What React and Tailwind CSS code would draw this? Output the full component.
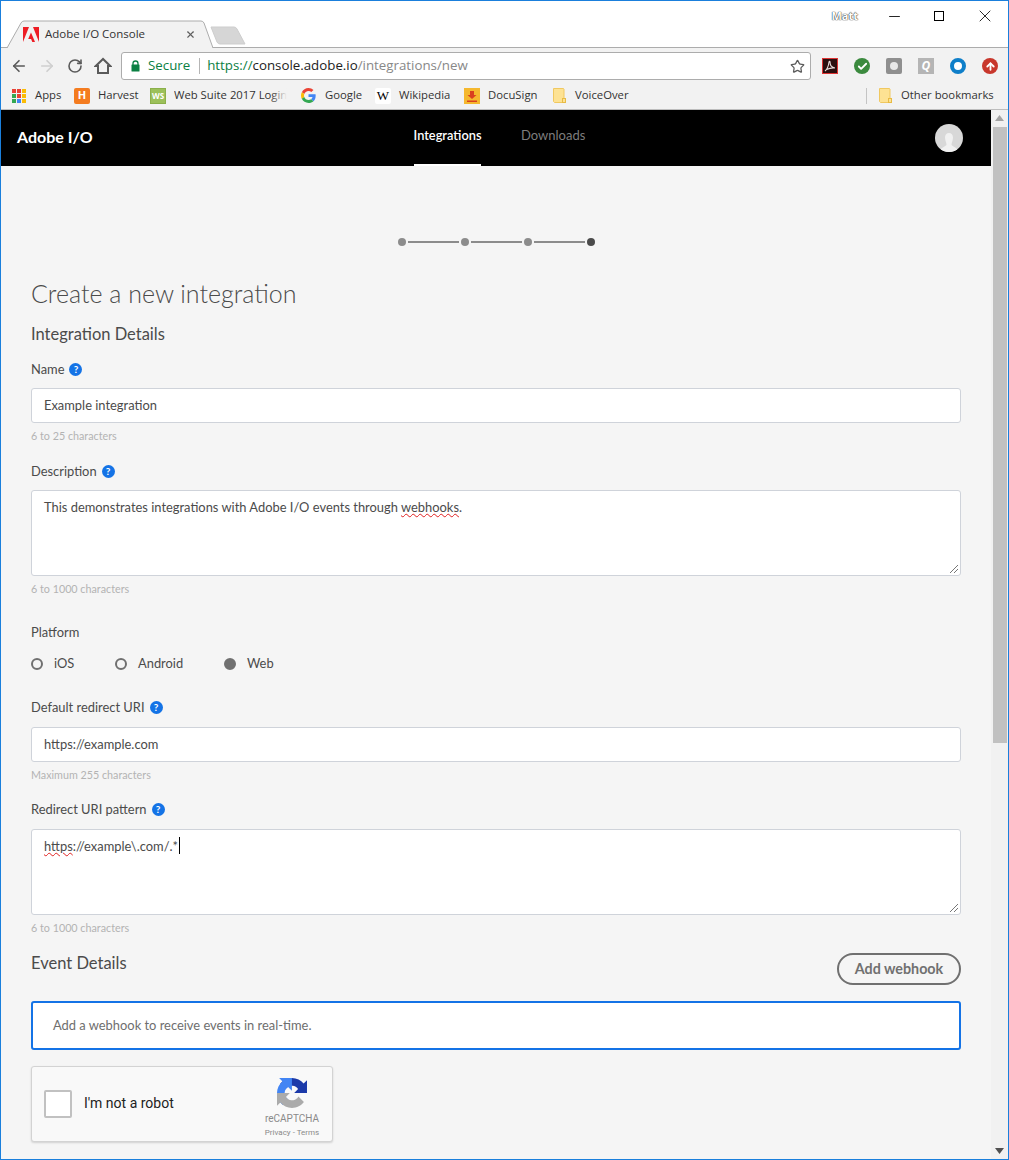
import { ArrowLeft, ArrowRight, RotateCw, Star, X, Minus, Check, ArrowUp } from 'lucide-react'

const UI_FONT = { fontFamily: '"Open Sans", sans-serif' }

function Help() {
  return (
    <span className="mb-[2px] ml-[5px] inline-flex h-[13px] w-[13px] items-center justify-center rounded-full bg-[#1473e6] text-[10px] font-bold leading-none text-white">?</span>
  )
}

function Label({ children, help, className = '' }) {
  return (
    <div className={`flex h-5 items-center text-[12.9px] text-[#4b4b4b] ${className}`}>
      {children}
      {help && <Help />}
    </div>
  )
}

function Hint({ children, className = '' }) {
  return <div className={`h-4 text-[10.75px] leading-4 text-[#b3b3b3] ${className}`}>{children}</div>
}

function TextInput({ children, className = '' }) {
  return (
    <div className={`flex h-[35px] items-center rounded-[3px] border border-[#cfd3da] bg-white px-3 text-[12.9px] text-[#4b4b4b] ${className}`}>
      {children}
    </div>
  )
}

function TextArea({ children, className = '' }) {
  return (
    <div className={`relative h-[86px] rounded-[3px] border border-[#cfd3da] bg-white px-3 pt-[6px] text-[12.9px] leading-5 text-[#4b4b4b] ${className}`}>
      {children}
      <svg className="absolute bottom-[1px] right-[1px]" width="10" height="10" viewBox="0 0 10 10">
        <path d="M1 9 9 1M5 9l4-4" stroke="#777" strokeWidth="1" fill="none" />
      </svg>
    </div>
  )
}

function Radio({ label, checked, className = '' }) {
  return (
    <div className={`flex items-center ${className}`}>
      <span className={`h-3 w-3 rounded-full border-2 border-[#707070] ${checked ? 'bg-[#707070]' : 'bg-transparent'}`} />
      <span className="ml-[11px] text-[12.9px] text-[#4b4b4b]">{label}</span>
    </div>
  )
}

function Folder() {
  return (
    <svg width="13" height="15" viewBox="0 0 13 15">
      <path d="M.5.5h10l.5.5v13.500H1.500l-1-1z" fill="#fde293" stroke="#f0c860" />
      <rect x="9.500" y="10.500" width="3" height="4" fill="#fde293" stroke="#e8bb45" />
    </svg>
  )
}

function Bookmark({ icon, children, className = '' }) {
  return (
    <div className={`flex items-center text-[11.3px] text-[#333] ${className}`}>
      {icon}
      {children}
    </div>
  )
}

function AppsGrid() {
  const colors = ['#e94235', '#e94235', '#fbbc04', '#34a853', '#e94235', '#fbbc04', '#34a853', '#4285f4', '#fbbc04']
  return (
    <div className="grid w-[14px] grid-cols-3 gap-[1px]">
      {colors.map((c, i) => (
        <span key={i} className="h-[4px] w-[4px]" style={{ background: c }} />
      ))}
    </div>
  )
}

function GoogleG() {
  return (
    <svg width="15" height="15" viewBox="0 0 48 48">
      <path fill="#EA4335" d="M24 9.500c3.500 0 6.700 1.300 9.100 3.500l6.800-6.800C35.800 2.400 30.200 0 24 0 14.600 0 6.500 5.400 2.600 13.200l7.900 6.100C12.400 13.700 17.700 9.500 24 9.500z" />
      <path fill="#4285F4" d="M46.900 24.500c0-1.600-.1-3.100-.4-4.500H24v9h12.900c-.6 3-2.200 5.500-4.700 7.200l7.700 6c4.500-4.200 7-10.300 7-17.700z" />
      <path fill="#FBBC05" d="M10.500 28.700c-.5-1.400-.8-3-.8-4.700s.3-3.200.8-4.700l-7.900-6.100C.9 16.500 0 20.100 0 24s.9 7.500 2.600 10.800l7.900-6.100z" />
      <path fill="#34A853" d="M24 48c6.500 0 11.900-2.100 15.900-5.800l-7.700-6c-2.100 1.400-4.900 2.300-8.200 2.300-6.300 0-11.600-4.200-13.500-9.900l-7.900 6.100C6.500 42.600 14.600 48 24 48z" />
    </svg>
  )
}

function AdobeLogo() {
  return (
    <svg width="16" height="15" viewBox="0 0 16 15">
      <path fill="#ed1c24" d="M10 0h6v15zM6 0H0v15zM8 5.500 12 15H9.300l-1.200-3H5.200z" />
    </svg>
  )
}

function HomeIcon() {
  return (
    <svg className="ml-[11px]" width="18" height="18" viewBox="0 0 18 18">
      <path d="M9 2 1.800 9H4v7h10V9h2.200z" fill="none" stroke="#5a5a5a" strokeWidth="2" strokeLinejoin="miter" />
    </svg>
  )
}

function LockIcon() {
  return (
    <svg width="9" height="12" viewBox="0 0 9 12">
      <path d="M2 5V3.500a2.500 2.500 0 0 1 5 0V5" fill="none" stroke="#0b8043" strokeWidth="1.300" />
      <rect x="0.500" y="4.500" width="8" height="7" rx="0.500" fill="#0b8043" />
    </svg>
  )
}

function ReaderIcon() {
  return (
    <div className="flex h-4 w-4 items-center justify-center border border-[#d33] bg-[#2b0f0f]">
      <svg width="12" height="12" viewBox="0 0 12 12">
        <path d="M1 11c2-1.500 3.500-5 4-9 .2-1 1-1 1 0 0 3 2 5.500 5 6-3-.5-6 .3-8.500 1.500" fill="none" stroke="#e8dcdc" strokeWidth="1.100" />
      </svg>
    </div>
  )
}

function DocuSignIcon() {
  return (
    <svg width="16" height="16" viewBox="0 0 16 16">
      <rect width="16" height="16" fill="#f5b82e" />
      <path d="M6 3h4v4h2.500L8 11 3.500 7H6zM3 12.500h10V14H3z" fill="#d9401f" />
    </svg>
  )
}

function RecaptchaLogo() {
  return (
    <svg width="30" height="30" viewBox="0 0 64 64">
      <path fill="#1c3aa9" d="M64 31.955l-.033-1.37V4.687l-7.160 7.160C50.948 4.674 42.033.093 32.050.093c-10.400 0-19.622 4.960-25.458 12.640l11.736 11.860a15.550 15.550 0 0 1 4.754-5.334c2.050-1.600 4.952-2.906 8.968-2.906.485 0 .860.057 1.135.163 4.976.393 9.288 3.140 11.828 7.124l-8.307 8.307 32.294.010" />
      <path fill="#4285f4" d="M31.862.094l-1.370.033H4.594l7.160 7.160C4.580 13.147 0 22.060 0 32.045c0 10.400 4.960 19.622 12.640 25.458L24.500 45.768a15.550 15.550 0 0 1-5.334-4.754c-1.600-2.050-2.906-4.952-2.906-8.968 0-.485.057-.860.163-1.135.393-4.976 3.140-9.288 7.124-11.828l8.307 8.307.010-32.294" />
      <path fill="#ababab" d="M.001 32.045l.033 1.370v25.898l7.160-7.160c5.860 7.173 14.774 11.754 24.760 11.754 10.400 0 19.622-4.960 25.458-12.640L45.677 39.407a15.550 15.550 0 0 1-4.754 5.334c-2.050 1.600-4.952 2.906-8.968 2.906-.485 0-.860-.057-1.135-.163-4.976-.393-9.288-3.140-11.828-7.124l8.307-8.307-32.294-.010" />
    </svg>
  )
}

function BrowserChrome() {
  return (
    <div style={UI_FONT}>
      {/* tab strip */}
      <div className="relative flex h-[47px] items-start border-b border-[#acacac] bg-white">
        <div className="relative ml-[6px] mt-[19px] flex h-[28px] w-[206px] items-center pl-[16px] pr-[17px]">
          <svg className="absolute left-0 top-0" width="206" height="28" viewBox="0 0 206 28">
            <path d="M0 28 14 3q1-2 3-2h177q2 0 3 2l9 25" fill="#f2f2f2" stroke="#acacac" />
          </svg>
          <span className="relative"><AdobeLogo /></span>
          <span className="relative ml-[6px] flex-1 text-[11.5px] text-[#333]">Adobe I/O Console</span>
          <X size={11} strokeWidth={2.5} className="relative text-[#5f5f5f]" />
        </div>
        <svg className="ml-[-3px] mt-[25px]" width="36" height="19" viewBox="0 0 36 19">
          <path d="M1 1h23q2 0 3 2l8 15H10q-2 0-3-2z" fill="#d6d6d6" stroke="#cdcdcd" />
        </svg>
        <div className="ml-auto mr-[13px] mt-[5px] flex items-center">
          <span className="mr-[28px] text-[11px] font-bold text-white [text-shadow:0_0_1px_#222,0_0_1px_#222]">Matt</span>
          <Minus size={17} strokeWidth={1.2} className="mr-[31px] text-black" />
          <span className="mr-[31px] h-[10px] w-[10px] border border-black" />
          <X size={20} strokeWidth={1} className="text-black" />
        </div>
      </div>

      {/* toolbar */}
      <div className="flex h-[37px] items-center bg-[#f2f2f2] pb-[1px] pl-[9px] pr-[10px]">
        <ArrowLeft size={18} strokeWidth={2.2} className="text-[#5a5a5a]" />
        <ArrowRight size={18} strokeWidth={2.2} className="ml-[10px] text-[#cfcfcf]" />
        <RotateCw size={16} strokeWidth={2.4} className="ml-[11px] text-[#5a5a5a]" />
        <HomeIcon />
        <div className="ml-[9px] flex h-[28px] w-[690px] items-center rounded-[3px] border border-[#acacac] bg-white pl-[9px] pr-[5px] text-[13.3px]">
          <LockIcon />
          <span className="ml-[8px] text-[#0b8043]">Secure</span>
          <span className="ml-[9px] mr-[7px] h-[16px] w-px bg-[#b5b5b5]" />
          <span className="text-[#0b8043]">https://</span>
          <span className="text-[#222]">console.adobe.io</span>
          <span className="text-[#888]">/integrations/new</span>
          <Star size={15} strokeWidth={2} className="ml-auto text-[#5a5a5a]" />
        </div>
        <div className="ml-[11px]"><ReaderIcon /></div>
        <div className="ml-[16px] flex h-4 w-4 items-center justify-center rounded-full bg-[#3b8a3e]"><Check size={11} strokeWidth={4} className="text-white" /></div>
        <div className="ml-[16px] flex h-4 w-4 items-center justify-center rounded-[2px] bg-[#8f8f8f]"><span className="h-[8px] w-[8px] rounded-full bg-[#e8e8e8]" /></div>
        <div className="ml-[16px] flex h-4 w-4 items-center justify-center bg-[#b5b5b5] text-[12px] font-bold italic leading-none text-white">Q</div>
        <div className="ml-[16px] h-4 w-4 rounded-full border-[4px] border-[#0f7fc9] bg-white" />
        <div className="ml-[16px] flex h-4 w-4 items-center justify-center rounded-full bg-[#c8372c]"><ArrowUp size={11} strokeWidth={4} className="text-white" /></div>
      </div>

      {/* bookmarks bar */}
      <div className="flex h-[25px] items-center border-b border-[#bdbdbd] bg-[#f2f2f2] pb-[3px] pl-[11px]">
        <Bookmark icon={<AppsGrid />} className="w-[62px]"><span className="ml-[9px]">Apps</span></Bookmark>
        <Bookmark className="w-[76px]" icon={<span className="flex h-4 w-4 items-center justify-center rounded-[2px] bg-[#f47c20] text-[11px] font-bold text-white">H</span>}><span className="ml-[8px]">Harvest</span></Bookmark>
        <Bookmark className="w-[151px] whitespace-nowrap" icon={<span className="flex h-4 w-4 shrink-0 items-center justify-center border border-[#8bb04a] bg-[#9cc05a] text-[8px] font-bold text-white">WS</span>}>
          <span className="relative ml-[8px] w-[113px] overflow-hidden">
            Web Suite 2017 Login
            <span className="absolute inset-y-0 right-0 w-4 bg-gradient-to-r from-transparent to-[#f2f2f2]" />
          </span>
        </Bookmark>
        <Bookmark className="w-[74px]" icon={<GoogleG />}><span className="ml-[9px]">Google</span></Bookmark>
        <Bookmark className="w-[89px]" icon={<span className="flex h-4 w-4 items-center justify-center rounded-[2px] bg-white text-[13px] text-black" style={{ fontFamily: '"Liberation Serif", serif' }}>W</span>}><span className="ml-[8px]">Wikipedia</span></Bookmark>
        <Bookmark className="w-[89px]" icon={<DocuSignIcon />}><span className="ml-[8px]">DocuSign</span></Bookmark>
        <Bookmark className="w-[313px]" icon={<Folder />}><span className="ml-[9px]">VoiceOver</span></Bookmark>
        <span className="h-[16px] w-px bg-[#c4c4c4]" />
        <Bookmark className="ml-[12px]" icon={<Folder />}><span className="ml-[9px]">Other bookmarks</span></Bookmark>
      </div>
    </div>
  )
}

function SiteHeader() {
  return (
    <div className="flex h-[56px] items-center bg-black pl-4 pr-[28px]">
      <span className="w-[397px] pb-[2px] text-[16px] font-bold text-white">Adobe I/O</span>
      <div className="flex h-full w-[107px] flex-col justify-center">
        <div className="flex h-full w-[67px] items-center justify-center border-b-2 border-white pb-[2px] text-[12.8px] font-semibold text-white">Integrations</div>
      </div>
      <span className="pb-[4px] text-[13px] text-[#7d7d7d]">Downloads</span>
      <div className="ml-auto flex h-[28px] w-[28px] items-end justify-center overflow-hidden rounded-full bg-[#d8d8d8]">
        <svg width="18" height="20" viewBox="0 0 18 20">
          <path d="M9 1c2.500 0 4 2 4 4.500S11.500 11 11.500 12.500c0 2 6.500 2.500 6.500 7.500H0c0-5 6.500-5.500 6.500-7.500C6.500 11 5 8 5 5.500S6.500 1 9 1z" fill="#f1f1f1" />
        </svg>
      </div>
    </div>
  )
}

function Stepper() {
  const dots = ['#8c8c8c', '#8c8c8c', '#8c8c8c', '#4b4b4b']
  return (
    <div className="flex items-center justify-center pl-[1px]">
      {dots.map((c, i) => (
        <div key={i} className="flex items-center">
          <span className="h-[8px] w-[8px] rounded-full" style={{ background: c }} />
          {i < 3 && <span className="mx-[2px] h-[2px] w-[50.7px] bg-[#8c8c8c]" />}
        </div>
      ))}
    </div>
  )
}

function Form() {
  return (
    <div className="flex-1 px-[30px]">
      <div className="mt-[72px]"><Stepper /></div>
      <h1 className="mt-[27px] h-[40px] text-[25px] font-light leading-[40px] text-[#4b4b4b]">Create a new integration</h1>
      <h2 className="mt-[9px] h-6 text-[16.5px] font-normal leading-6 text-[#4b4b4b]">Integration Details</h2>
      <Label help className="mt-[14px]">Name</Label>
      <TextInput className="mt-[8px]">Example integration</TextInput>
      <Hint className="mt-[5px]">6 to 25 characters</Hint>
      <Label help className="mt-[18px]">Description</Label>
      <TextArea className="mt-[8px]">
        This demonstrates integrations with Adobe I/O events through{' '}
        <span className="underline decoration-[#e02020] decoration-wavy decoration-1">webhooks</span>.
      </TextArea>
      <Hint className="mt-[5px]">6 to 1000 characters</Hint>
      <Label className="mt-[26px]">Platform</Label>
      <div className="mt-[11px] flex h-5 items-center">
        <Radio label="iOS" className="w-[84px]" />
        <Radio label="Android" className="w-[109px]" />
        <Radio label="Web" checked />
      </div>
      <Label help className="mt-[24px]">Default redirect URI</Label>
      <TextInput className="mt-[9px]">https://example.com</TextInput>
      <Hint className="mt-[5px]">Maximum 255 characters</Hint>
      <Label help className="mt-[17px]">Redirect URI pattern</Label>
      <TextArea className="mt-[9px]">
        <span className="underline decoration-[#e02020] decoration-wavy decoration-1">https</span>://example\.com/.*
        <span className="ml-[1px] inline-block h-[17px] w-px bg-black align-text-bottom" />
      </TextArea>
      <Hint className="mt-[5px]">6 to 1000 characters</Hint>
      <div className="mt-[17px] flex items-start justify-between">
        <h2 className="text-[16.5px] font-normal leading-5 text-[#4b4b4b]">Event Details</h2>
        <button className="h-[32px] w-[124px] rounded-full border-2 border-[#707070] text-[14.3px] font-bold text-[#707070]">Add webhook</button>
      </div>
      <div className="mt-[16px] flex h-[49px] items-center rounded-[3px] border-2 border-[#1473e6] bg-white pl-[20px] text-[12.9px] text-[#6e6e6e]">
        Add a webhook to receive events in real-time.
      </div>
      <div className="mt-[16px] flex h-[76px] w-[302px] items-center rounded-[3px] border border-[#d3d3d3] bg-[#f9f9f9] pl-[12px] pr-[12px] shadow-[0_1px_2px_rgba(0,0,0,0.15)]" style={{ fontFamily: 'Roboto, sans-serif' }}>
        <span className="h-[28px] w-[28px] rounded-[2px] border-2 border-[#c1c1c1] bg-white" />
        <span className="ml-[12px] flex-1 pb-[2px] text-[14px] text-[#222]">I'm not a robot</span>
        <div className="flex w-[56px] flex-col items-center self-start pt-[11px]">
          <RecaptchaLogo />
          <span className="mt-[5px] text-[10px] leading-[12px] text-[#8a8a8a]">reCAPTCHA</span>
          <span className="mt-[3px] whitespace-nowrap text-[8px] leading-[10px] text-[#8a8a8a]">Privacy - Terms</span>
        </div>
      </div>
    </div>
  )
}

function Scrollbar() {
  return (
    <div className="flex w-[17px] flex-col items-center bg-[#f1f1f1]">
      <svg className="mt-[5px]" width="9" height="6" viewBox="0 0 9 6"><path d="M4.500 0 9 6H0z" fill="#a3a3a3" /></svg>
      <div className="mt-[6px] h-[616px] w-[14px] bg-[#c1c1c1]" />
      <svg className="mb-[5px] mt-auto" width="9" height="6" viewBox="0 0 9 6"><path d="M0 0h9L4.500 6z" fill="#505050" /></svg>
    </div>
  )
}

export default function App() {
  return (
    <div className="flex h-[1160px] w-[1009px] flex-col overflow-hidden border border-[#1a7fdc] bg-white" style={{ fontFamily: 'Lato, sans-serif' }}>
      <BrowserChrome />
      <div className="flex min-h-0 flex-1 bg-[#f5f5f5]">
        <div className="flex flex-1 flex-col">
          <SiteHeader />
          <Form />
        </div>
        <Scrollbar />
      </div>
    </div>
  )
}
